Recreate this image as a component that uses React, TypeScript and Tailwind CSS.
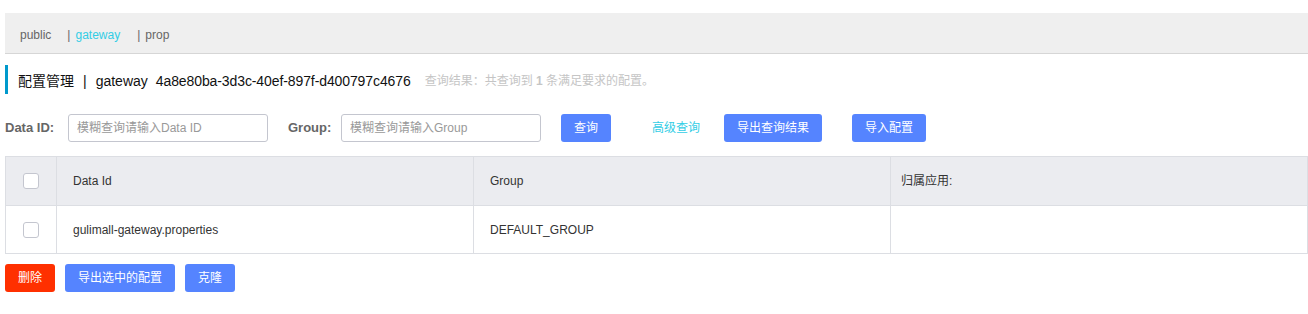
const font = "font-['Liberation_Sans','Noto_Sans_CJK_SC',sans-serif]";

const Checkbox = () => (
  <span className="inline-block h-4 w-4 rounded-[3px] border border-[#c4c6cf] bg-white" />
);

const Btn = ({ children, red }: { children: React.ReactNode; red?: boolean }) => (
  <button
    className={
      "h-7 rounded-[3px] px-[13px] text-xs leading-7 text-white " +
      (red ? "bg-[#ff3000]" : "bg-[#5584ff]")
    }
  >
    {children}
  </button>
);

export default function App() {
  return (
    <div className={`${font} min-h-[314px] bg-white pl-[5px] pt-[13px] text-xs text-[#333]`}>
      {/* namespace bar */}
      <div className="flex h-[41px] items-center border-b border-[#d6d6d6] bg-[#efefef] pl-[15px] pt-[3px] text-xs">
        <span className="text-[#666]">public</span>
        <span className="ml-[16px] text-[#666]">|</span>
        <span className="ml-[5px] text-[#33cde5]">gateway</span>
        <span className="ml-[17px] text-[#666]">|</span>
        <span className="ml-[5px] text-[#666]">prop</span>
      </div>

      {/* title */}
      <div className="mt-[11px] flex h-[29px] items-center border-l-[3px] border-[#0099cc] pl-[10px] pt-[2px]">
        <span className="text-sm text-[#111]">配置管理</span>
        <span className="mx-[9px] text-sm text-[#111]">|</span>
        <span className="text-sm text-[#111]">gateway</span>
        <span className="ml-[8px] text-sm tracking-[-0.1px] text-[#111]">4a8e80ba-3d3c-40ef-897f-d400797c4676</span>
        <span className="ml-[14px] text-xs text-[#c5c5c5]">
          查询结果：共查询到 <b>1</b> 条满足要求的配置。
        </span>
      </div>

      {/* filters */}
      <div className="mt-[20px] flex h-7 items-center">
        <span className="w-[63px] text-[13px] font-bold text-[#666]">Data ID:</span>
        <input
          className="h-7 w-[200px] rounded-[3px] border border-[#c4c6cf] px-2 text-xs placeholder:text-[#999]"
          placeholder="模糊查询请输入Data ID"
        />
        <span className="ml-5 w-[53px] text-[13px] font-bold text-[#666]">Group:</span>
        <input
          className="h-7 w-[200px] rounded-[3px] border border-[#c4c6cf] px-2 text-xs placeholder:text-[#999]"
          placeholder="模糊查询请输入Group"
        />
        <div className="ml-5">
          <Btn>查询</Btn>
        </div>
        <span className="ml-[41px] text-xs text-[#33cde5]">高级查询</span>
        <div className="ml-6">
          <Btn>导出查询结果</Btn>
        </div>
        <div className="ml-[30px]">
          <Btn>导入配置</Btn>
        </div>
      </div>

      {/* table */}
      <div className="mt-[14px] border border-[#dcdee3]">
        <div className="grid h-12 grid-cols-[51px_417px_417px_1fr] bg-[#ebecf0] text-xs text-[#333]">
          <div className="flex items-center justify-center border-r border-[#dcdee3]">
            <Checkbox />
          </div>
          <div className="flex items-center border-r border-[#dcdee3] pl-4">Data Id</div>
          <div className="flex items-center border-r border-[#dcdee3] pl-4">Group</div>
          <div className="flex items-center pl-[10px]">归属应用:</div>
        </div>
        <div className="grid h-12 grid-cols-[51px_417px_417px_1fr] border-t border-[#dcdee3] text-xs text-[#333]">
          <div className="flex items-center justify-center border-r border-[#dcdee3]">
            <Checkbox />
          </div>
          <div className="flex items-center border-r border-[#dcdee3] pl-4">gulimall-gateway.properties</div>
          <div className="flex items-center border-r border-[#dcdee3] pl-4">DEFAULT_GROUP</div>
          <div />
        </div>
      </div>

      {/* actions */}
      <div className="mt-[10px] flex gap-[10px]">
        <Btn red>删除</Btn>
        <Btn>导出选中的配置</Btn>
        <Btn>克隆</Btn>
      </div>
    </div>
  );
}
